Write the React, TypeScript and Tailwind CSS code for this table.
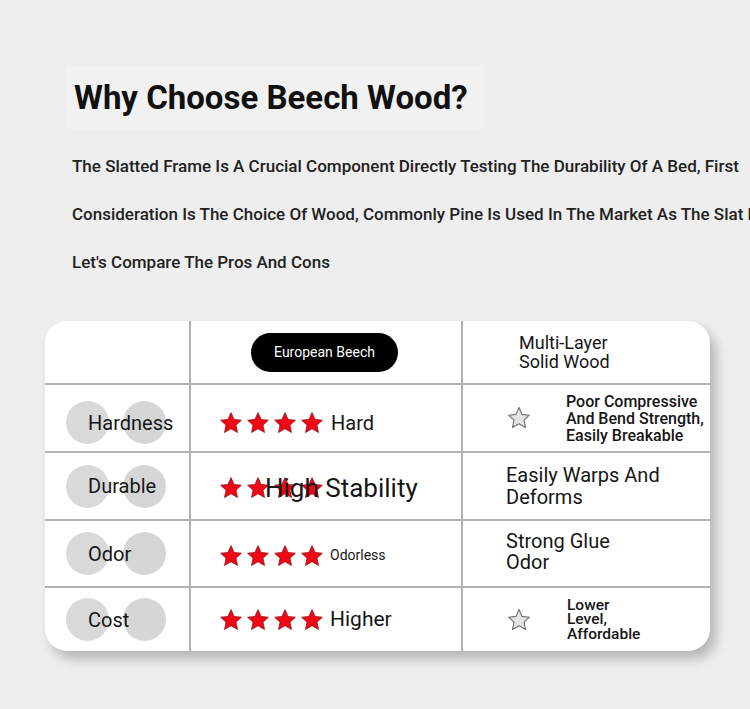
import type { ReactNode } from 'react'

const FONT = { fontFamily: 'Roboto, "Liberation Sans", sans-serif' }

function Star({ outline = false }: { outline?: boolean }) {
  return (
    <svg width="24" height="24" viewBox="0 0 24 24" className="shrink-0">
      <polygon
        points="12,1.6 15.1,8.4 22.4,9.2 17,14.2 18.5,21.5 12,17.8 5.5,21.5 7,14.2 1.6,9.2 8.9,8.4"
        fill={outline ? '#e3e3e3' : '#f20514'}
        stroke={outline ? '#6f6f6f' : '#7a1010'}
        strokeWidth={outline ? 1.1 : 0.7}
        strokeLinejoin="round"
      />
    </svg>
  )
}

function Stars() {
  return (
    <div className="flex gap-[3px]">
      <Star />
      <Star />
      <Star />
      <Star />
    </div>
  )
}

function Label({ children, extra = '' }: { children: ReactNode; extra?: string }) {
  return (
    <div className={`relative flex items-center border-r-2 border-[#b3b3b3] ${extra}`}>
      {/* two grey discs behind the label */}
      <div className="absolute left-[21px] w-[43px] h-[43px] rounded-full bg-[#d9d9d9]" />
      <div className="absolute left-[78px] w-[43px] h-[43px] rounded-full bg-[#d6d6d6]" />
      <span className="relative pl-[43px] text-[20px] text-[#161616]">{children}</span>
    </div>
  )
}

const cell = 'flex items-center border-b-2 border-[#b3b3b3]'

export default function App() {
  return (
    <div className="w-[750px] h-[709px] overflow-hidden bg-[#eeeeee] pt-[66px]" style={FONT}>
      {/* Heading */}
      <div className="ml-[66px] w-[418px] h-[64px] bg-[#f1f1f1] flex items-center pl-2">
        <h1 className="text-[33px] font-bold text-[#111]">Why Choose Beech Wood?</h1>
      </div>

      {/* Intro */}
      <div className="mt-[12px] pl-[72px] text-[17px] font-medium text-[#222] leading-[48px] whitespace-nowrap">
        <p>The Slatted Frame Is A Crucial Component Directly Testing The Durability Of A Bed, First</p>
        <p>Consideration Is The Choice Of Wood, Commonly Pine Is Used In The Market As The Slat Material</p>
        <p>Let's Compare The Pros And Cons</p>
      </div>

      {/* Comparison card */}
      <div className="mt-[35px] ml-[45px] w-[665px] rounded-[22px] bg-white overflow-hidden shadow-[6px_8px_12px_rgba(0,0,0,0.24)] grid grid-cols-[146px_272px_247px] grid-rows-[64px_68px_68px_67px_63px]">
        {/* header */}
        <div className="border-r-2 border-b-2 border-[#b3b3b3]" />
        <div className={`${cell} border-r-2 pl-[60px]`}>
          <div className="w-[147px] h-[39px] rounded-full bg-black text-white text-[14px] flex items-center justify-center">
            European Beech
          </div>
        </div>
        <div className={`${cell} pl-[56px] text-[18px] leading-[19px] text-[#161616]`}>
          <p>Multi-Layer<br />Solid Wood</p>
        </div>

        {/* hardness */}
        <Label extra="border-b-2 pt-[9px]">Hardness</Label>
        <div className={`${cell} border-r-2 pl-[28px] pt-[9px] gap-[7px]`}>
          <Stars />
          <span className="text-[20px] text-[#161616]">Hard</span>
        </div>
        <div className={`${cell} pl-[44px]`}>
          <Star outline />
          <p className="ml-[35px] text-[16px] leading-[17px] font-medium text-[#161616]">
            Poor Compressive<br />And Bend Strength,<br />Easily Breakable
          </p>
        </div>

        {/* durable */}
        <Label extra="border-b-2">Durable</Label>
        <div className={`${cell} relative border-r-2 pl-[28px] pt-[4px]`}>
          <Stars />
          <span className="absolute left-[74px] top-[16px] text-[26px] text-[#161616]">High Stability</span>
        </div>
        <div className={`${cell} pl-[43px] text-[20px] leading-[22px] text-[#161616]`}>
          <p>Easily Warps And<br />Deforms</p>
        </div>

        {/* odor */}
        <Label extra="border-b-2">Odor</Label>
        <div className={`${cell} border-r-2 pl-[28px] pt-[4px] gap-[6px]`}>
          <Stars />
          <span className="text-[14px] text-[#161616]">Odorless</span>
        </div>
        <div className={`${cell} pl-[43px] pb-[4px] text-[20px] leading-[21px] text-[#161616]`}>
          <p>Strong Glue<br />Odor</p>
        </div>

        {/* cost */}
        <Label>Cost</Label>
        <div className="flex items-center border-r-2 border-[#b3b3b3] pl-[28px] gap-[6px]">
          <Stars />
          <span className="text-[21px] text-[#161616]">Higher</span>
        </div>
        <div className="flex items-center pl-[44px]">
          <Star outline />
          <p className="ml-[36px] text-[15.5px] leading-[14.5px] font-medium text-[#161616]">
            Lower<br />Level,<br />Affordable
          </p>
        </div>
      </div>
    </div>
  )
}
